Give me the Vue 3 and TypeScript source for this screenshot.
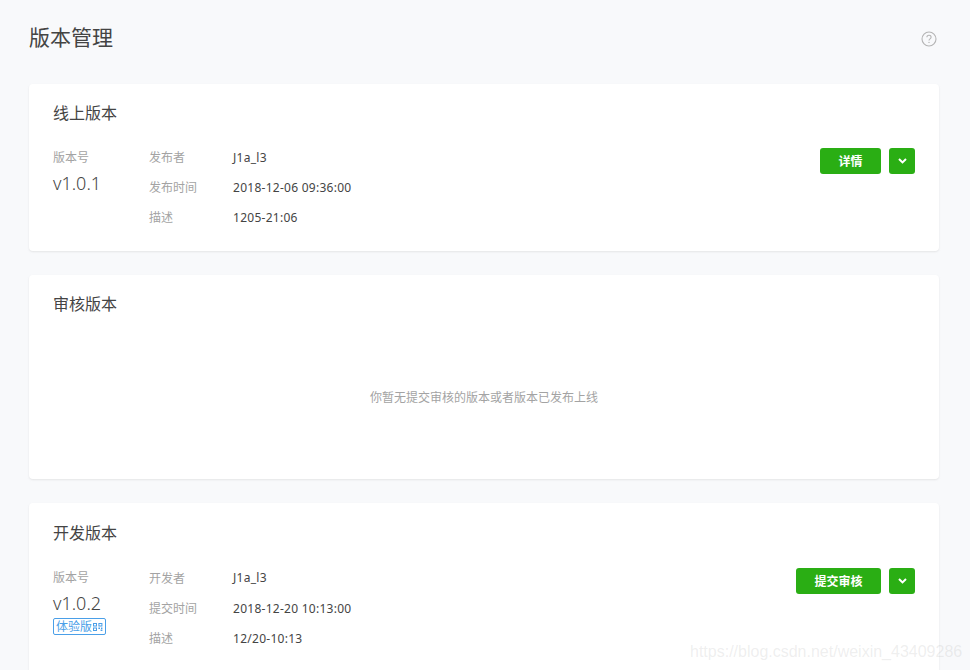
<script setup lang="ts">
interface Row { label: string; value: string }
interface Version {
  title: string; num: string; rows: Row[]; action: string; wide: boolean; badge: boolean
}
const online: Version = {
  title: '线上版本', num: 'v1.0.1', action: '详情', wide: false, badge: false,
  rows: [
    { label: '发布者', value: 'J1a_l3' },
    { label: '发布时间', value: '2018-12-06 09:36:00' },
    { label: '描述', value: '1205-21:06' },
  ],
}
const dev: Version = {
  title: '开发版本', num: 'v1.0.2', action: '提交审核', wide: true, badge: true,
  rows: [
    { label: '开发者', value: 'J1a_l3' },
    { label: '提交时间', value: '2018-12-20 10:13:00' },
    { label: '描述', value: '12/20-10:13' },
  ],
}
const versions = [online, dev]
</script>

<template>
  <div class="page">
    <header class="head">
      <h1 class="page-title">版本管理</h1>
      <svg class="help" width="16" height="16" viewBox="0 0 16 16" fill="none">
        <circle cx="8" cy="8" r="7" stroke="#b4b4b4" stroke-width="1.1" />
        <path d="M5.9 6.3c0-1.2.9-2 2.1-2s2.1.8 2.1 1.9c0 1.7-2.1 1.6-2.1 3.3" stroke="#b4b4b4" stroke-width="1.1" />
        <circle cx="8" cy="11.4" r=".7" fill="#b4b4b4" />
      </svg>
    </header>

    <section class="card online">
      <h2 class="card-title">{{ versions[0].title }}</h2>
      <div class="body">
        <div class="ver">
          <div class="ver-label">版本号</div>
          <div class="ver-num">{{ versions[0].num }}</div>
        </div>
        <dl class="info">
          <div v-for="r in versions[0].rows" :key="r.label" class="row">
            <dt>{{ r.label }}</dt>
            <dd>{{ r.value }}</dd>
          </div>
        </dl>
        <div class="actions">
          <button class="btn">{{ versions[0].action }}</button>
          <button class="btn arrow">
            <svg width="9" height="6" viewBox="0 0 9 6" fill="none"><path d="M1 1 4.5 4.4 8 1" stroke="#fff" stroke-width="2" /></svg>
          </button>
        </div>
      </div>
    </section>

    <section class="card review">
      <h2 class="card-title">审核版本</h2>
      <p class="empty">你暂无提交审核的版本或者版本已发布上线</p>
    </section>

    <section class="card develop">
      <h2 class="card-title">{{ versions[1].title }}</h2>
      <div class="body">
        <div class="ver">
          <div class="ver-label">版本号</div>
          <div class="ver-num">{{ versions[1].num }}</div>
          <span class="badge">体验版
            <svg width="10" height="10" viewBox="0 0 10 10" fill="#4a9fe8"><path d="M0 1h4v3.4H0zM1 2v1.4h2V2zM5.4 1h4v3.4h-4zM6.4 2v1.4h2V2zM0 5.6h4V9H0zM1 6.6V8h2V6.6zM5.4 5.6H7V7H5.4zM7.6 7.4h1.8V9H7.6zM8 5.6h1.4V7H8z" fill-rule="evenodd" /></svg>
          </span>
        </div>
        <dl class="info">
          <div v-for="r in versions[1].rows" :key="r.label" class="row">
            <dt>{{ r.label }}</dt>
            <dd>{{ r.value }}</dd>
          </div>
        </dl>
        <div class="actions">
          <button class="btn wide">{{ versions[1].action }}</button>
          <button class="btn arrow">
            <svg width="9" height="6" viewBox="0 0 9 6" fill="none"><path d="M1 1 4.5 4.4 8 1" stroke="#fff" stroke-width="2" /></svg>
          </button>
        </div>
      </div>
    </section>

    <div class="watermark">https://blog.csdn.net/weixin_43409286</div>
  </div>
</template>

<style>
html, body { margin: 0; padding: 0; background: #f8f9fb; overflow: hidden; }
</style>

<style scoped>
.page {
  position: relative;
  box-sizing: border-box;
  width: 970px;
  height: 670px;
  overflow: hidden;
  padding: 0 31px 0 29px;
  background: #f8f9fb;
  font-family: "Noto Sans", "Noto Sans CJK SC", sans-serif;
  color: #444;
}
.head {
  display: flex;
  align-items: center;
  justify-content: space-between;
  height: 84px;
  padding: 0 2px 10px 0;
  box-sizing: border-box;
}
.page-title {
  margin: 0;
  font-size: 21px;
  font-weight: 400;
  line-height: 30px;
  color: #444;
}
.help { display: block; margin-top: 4px; }
.card {
  box-sizing: border-box;
  background: #fff;
  border-radius: 4px;
  box-shadow: 0 1px 2px rgba(150, 150, 150, .2);
  padding: 0 24px;
  margin-bottom: 24px;
}
.online { height: 167px; }
.review { height: 204px; }
.develop { height: 200px; }
.card-title {
  margin: 0;
  padding-top: 17px;
  font-size: 16px;
  font-weight: 400;
  line-height: 24px;
  color: #444;
}
.develop .card-title { padding-top: 18px; }
.body {
  display: flex;
  align-items: flex-start;
  margin-top: 17px;
}
.ver { width: 96px; flex: none; margin-top: 1px; }
.ver-label {
  font-size: 12px;
  line-height: 30px;
  color: #a3a3a3;
}
.ver-num {
  font-size: 18px;
  font-weight: 300;
  line-height: 24px;
  margin-top: -2px;
  color: #444;
}
.badge {
  display: inline-flex;
  align-items: center;
  gap: 1px;
  box-sizing: border-box;
  height: 17px;
  margin-top: 3px;
  padding: 0 2px;
  border: 1px solid #4a9fe8;
  border-radius: 2px;
  font-size: 12px;
  line-height: 15px;
  color: #4a9fe8;
  vertical-align: top;
}
.info { margin: 0; flex: 1; }
.row { display: flex; height: 30px; align-items: center; }
.develop .row:first-child { height: 31px; align-items: flex-start; padding-top: 7px; box-sizing: border-box; }
.row dt { width: 84px; font-size: 12px; color: #a3a3a3; }
.row dd { margin: 0; font-size: 12px; letter-spacing: .27px; color: #444; }
.actions { display: flex; gap: 8px; margin-top: 6px; }
.btn {
  box-sizing: border-box;
  width: 61px;
  height: 26px;
  padding: 0;
  border: 0;
  border-radius: 3px;
  background: #2aae14;
  color: #fff;
  font: 700 12px "Noto Sans", "Noto Sans CJK SC", sans-serif;
  display: flex;
  align-items: center;
  justify-content: center;
}
.btn.wide { width: 85px; }
.btn.arrow { width: 26px; }
.empty {
  margin: 0;
  padding-top: 73px;
  text-align: center;
  font-size: 12px;
  line-height: 18px;
  color: #a3a3a3;
}
.watermark {
  position: absolute;
  left: 690px;
  top: 640px;
  font-family: "Liberation Sans", sans-serif;
  font-size: 16px;
  font-weight: 400;
  line-height: 24px;
  white-space: nowrap;
  color: rgba(170, 170, 170, .2);
}
</style>
